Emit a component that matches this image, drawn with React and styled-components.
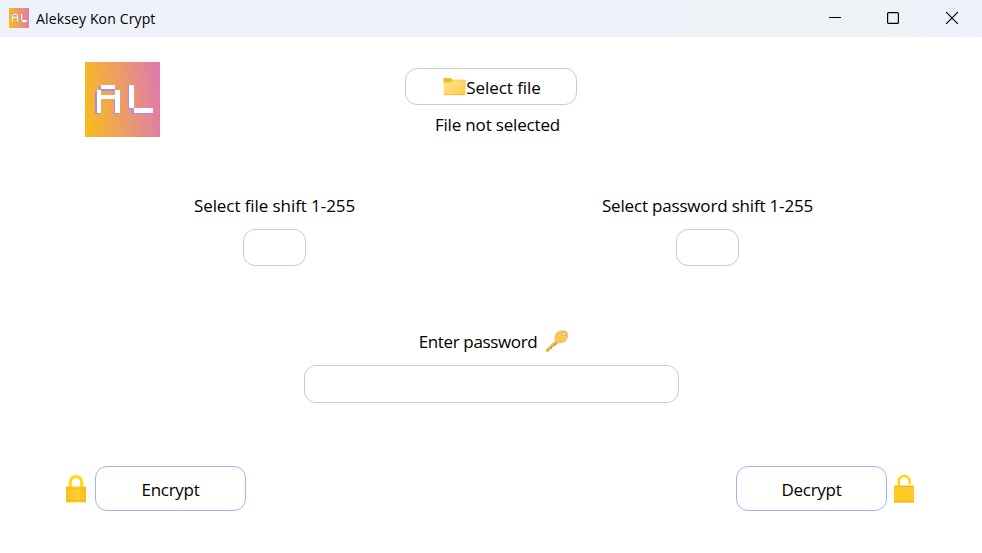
import React from "react";
import styled, { createGlobalStyle } from "styled-components";

const GlobalStyle = createGlobalStyle`
  * { box-sizing: border-box; }
  body {
    margin: 0;
    background: #fff;
    color: #000;
    font-family: "Segoe UI", "Open Sans", "Noto Sans", sans-serif;
    overflow: hidden;
  }
`;

const Window = styled.div`
  width: 982px;
  height: 553px;
  display: flex;
  flex-direction: column;
  background: #fff;
`;

const TitleBar = styled.header`
  height: 37px;
  flex: none;
  display: flex;
  align-items: flex-start;
  padding: 8px 0 0 9px;
  background: linear-gradient(90deg, #eef3fb 0%, #edf2f8 50%, #eef3f8 92%, #eef2fc 100%);
`;

const Title = styled.span`
  flex: 1;
  margin-left: 7px;
  font-size: 14px;
  line-height: 21px;
  letter-spacing: 0.14px;
  white-space: nowrap;
`;

const Controls = styled.div`
  display: flex;
  gap: 44px;
  margin: 3px 23px 0 0;

  svg:last-child { margin-left: 1px; }
`;

const Content = styled.main`
  flex: 1;
  display: flex;
  flex-direction: column;
`;

const TopRow = styled.section`
  display: grid;
  grid-template-columns: 320px 172px;
  height: 157px;
  padding: 25px 0 0 85px;
`;

const FilePicker = styled.div`
  display: flex;
  flex-direction: column;
  align-items: center;
  padding-top: 6px;
  gap: 8px;
`;

const Label = styled.label`
  display: flex;
  align-items: center;
  height: 24px;
  font-size: 17px;
  line-height: 24px;
  letter-spacing: ${(p) => p.$spacing ?? 0}px;
  white-space: nowrap;
`;

const FileStatus = styled(Label)`
  padding-left: 13px;
`;

const Button = styled.button`
  flex: none;
  display: flex;
  align-items: center;
  justify-content: center;
  width: ${(p) => p.$width}px;
  height: ${(p) => p.$height}px;
  padding: 1px 0 0;
  border: 1px solid ${(p) => (p.$accent ? "#9db6f2" : "#cacaca")};
  border-radius: 12px;
  background: #fff;
  color: #000;
  font-family: inherit;
  font-size: 17px;
  letter-spacing: ${(p) => p.$spacing ?? 0}px;
  white-space: nowrap;
`;

const FileButton = styled(Button)`
  padding-left: 2px;
`;

const Input = styled.input`
  width: ${(p) => p.$width}px;
  height: ${(p) => p.$height ?? 37}px;
  padding: 0 10px;
  border: 1px solid #cacaca;
  border-radius: 12px;
  background: #fff;
  font: inherit;
  outline: none;
`;

const ShiftRow = styled.section`
  display: grid;
  grid-template-columns: 433px 433px;
  justify-content: center;
  height: 137px;
`;

const Field = styled.div`
  display: flex;
  flex-direction: column;
  align-items: center;
  gap: 11px;
`;

const PasswordRow = styled(Field)`
  height: 136px;
`;

const PasswordLabel = styled.div`
  display: flex;
  align-items: flex-start;
  gap: 8px;
  margin: -1px 0 0 6px;
  height: 24px;

  svg { margin-top: -1px; }
`;

const ActionRow = styled.section`
  display: flex;
  justify-content: space-between;
  margin-top: -1px;
  padding: 0 67px 0 65px;
`;

const Action = styled.div`
  display: flex;
  align-items: center;
  gap: ${(p) => p.$gap}px;
`;

function Logo({ size, small }) {
  const id = small ? "logoSmall" : "logoLarge";
  return (
    <svg width={size} height={size} viewBox={small ? "0 0 20 20" : "0 0 75 75"} shapeRendering={small ? "auto" : "crispEdges"} aria-label="AL">
      <defs>
        <linearGradient id={id} x1="0" y1=".56" x2="1" y2=".44">
          <stop offset="0" stopColor="#f7ba20" />
          <stop offset=".5" stopColor="#eb9c68" />
          <stop offset="1" stopColor="#df7ca8" />
        </linearGradient>
      </defs>
      <rect width={small ? 20 : 75} height={small ? 20 : 75} fill={`url(#${id})`} />
      {small ? (
        <>
          <path fill="#a18bff" d="M4 7h4v1H4zM11 7h1v6h-1z" />
          <path fill="#fff" d="M4 6h4v1H4zM3 7h1v7H3zM8 7h1v7H8zM4 9h4v1H4zM12 6h1v6h-1zM13 12h5v2h-5z" />
        </>
      ) : (
        <>
          <path fill="#a18bff" d="M10 29h2v23h-2zM14 24h2v4h-2zM16 27h14v2H16zM29 37h1v15h-1zM10 51h5v1h-5zM29 51h5v1h-5zM43 24h1v23h-1zM43 46h5v1h-5zM47 47h2v5h-2zM48 51h18v1H48z" />
          <path fill="#fff" d="M16 23h14v4H16zM12 28h4v23h-4zM30 28h5v23h-5zM16 33h14v4H16zM44 23h5v23h-5zM49 46h19v5H49z" />
        </>
      )}
    </svg>
  );
}

function FolderIcon() {
  return (
    <svg width="23" height="18" viewBox="0 0 23 18">
      <defs>
        <linearGradient id="folder" x1="0" y1="0" x2="1" y2="1">
          <stop offset="0" stopColor="#ffe69a" />
          <stop offset="1" stopColor="#ffca3c" />
        </linearGradient>
      </defs>
      <path d="M.5 1Q.5 0 1.5 0H7.5L9.5 1.7H21.5Q22.5 1.7 22.5 2.7V6H.5Z" fill="#f8b81b" />
      <path d="M.5 4.5H7.5L9.8 2.3H21.7Q22.5 2.3 22.5 3.2V16Q22.5 17 21.5 17H1.5Q.5 17 .5 16Z" fill="url(#folder)" />
      <path d="M1 16.7H22" stroke="#edb62d" strokeWidth=".6" />
    </svg>
  );
}

function KeyIcon() {
  return (
    <svg width="24" height="24" viewBox="0 0 24 24">
      <path d="M12 10.2L1.2 20.5L1 22.7L3.8 22.5L5 20.2L7 20L7.4 17.8L9.6 17.3L14 13.5Z" fill="#dda043" />
      <path d="M12.3 11L1.6 21.2" stroke="#edbd58" strokeWidth="1.6" />
      <path d="M11.2 3.8C13 1 19 .3 21.8 2.5C24.3 5 23 11 20.2 12.8C17.4 14.5 12.4 15 10.6 13C8.8 11 9.2 6.5 11.2 3.8Z" fill="#f5c859" />
      <circle cx="18.7" cy="5" r="1.6" fill="#fff" stroke="#b98b3b" strokeWidth=".6" />
    </svg>
  );
}

function LockIcon({ open }) {
  const id = open ? "lockOpen" : "lockClosed";
  return (
    <svg width="22" height="30" viewBox="0 0 22 30">
      <defs>
        <linearGradient id={id} x1="0" y1="0" x2="1" y2="0">
          <stop offset="0" stopColor={open ? "#ffc928" : "#ffbd24"} />
          <stop offset=".6" stopColor={open ? "#ffc928" : "#ffd02c"} />
          <stop offset="1" stopColor={open ? "#ffc928" : "#ffb91f"} />
        </linearGradient>
      </defs>
      <path
        d={open ? "M5.8 13V7.2A5.4 5.4 0 0 1 16.6 7.2V10.3" : "M5.3 14V8.2A5.7 5.7 0 0 1 16.7 8.2V14"}
        fill="none"
        stroke={open ? "#ffd800" : "#fedc05"}
        strokeWidth={open ? 2.3 : 3.1}
      />
      <rect x="1" y={open ? 11.8 : 12.5} width="20" height={open ? 17 : 16} rx=".6" fill={`url(#${id})`} />
      <path d={open ? "M1 12.3H21M1 27.4H21" : "M1 14.2H21M1 26.5H21"} stroke="#f5a91c" strokeWidth={open ? 1 : 0.7} />
    </svg>
  );
}

function WindowControls() {
  return (
    <Controls>
      <svg width="14" height="14" viewBox="0 0 14 14"><path d="M1 6.5H13" stroke="#000" /></svg>
      <svg width="14" height="14" viewBox="0 0 14 14"><rect x="1.6" y="1.6" width="10.8" height="10.8" rx="1" fill="none" stroke="#000" strokeWidth="1.2" /></svg>
      <svg width="14" height="14" viewBox="0 0 14 14"><path d="M1.2 1.2L12.8 12.8M12.8 1.2L1.2 12.8" stroke="#000" strokeWidth="1.2" /></svg>
    </Controls>
  );
}

export default function App() {
  return (
    <>
      <GlobalStyle />
      <Window>
        <TitleBar>
          <Logo size={20} small />
          <Title>Aleksey Kon Crypt</Title>
          <WindowControls />
        </TitleBar>
        <Content>
          <TopRow>
            <Logo size={75} />
            <FilePicker>
              <FileButton $width={172} $height={37} $spacing={-0.07}>
                <FolderIcon />Select file
              </FileButton>
              <FileStatus as="span" $spacing={-0.17}>File not selected</FileStatus>
            </FilePicker>
          </TopRow>
          <ShiftRow>
            <Field>
              <Label htmlFor="fileShift" $spacing={-0.08}>Select file shift 1-255</Label>
              <Input id="fileShift" $width={63} />
            </Field>
            <Field>
              <Label htmlFor="passwordShift" $spacing={-0.18}>Select password shift 1-255</Label>
              <Input id="passwordShift" $width={63} />
            </Field>
          </ShiftRow>
          <PasswordRow>
            <PasswordLabel>
              <Label htmlFor="password" $spacing={-0.36}>Enter password</Label>
              <KeyIcon />
            </PasswordLabel>
            <Input id="password" $width={375} $height={38} />
          </PasswordRow>
          <ActionRow>
            <Action $gap={8}>
              <LockIcon />
              <Button $accent $width={151} $height={45} $spacing={-0.3}>Encrypt</Button>
            </Action>
            <Action $gap={6}>
              <Button $accent $width={151} $height={45} $spacing={-0.3}>Decrypt</Button>
              <LockIcon open />
            </Action>
          </ActionRow>
        </Content>
      </Window>
    </>
  );
}
